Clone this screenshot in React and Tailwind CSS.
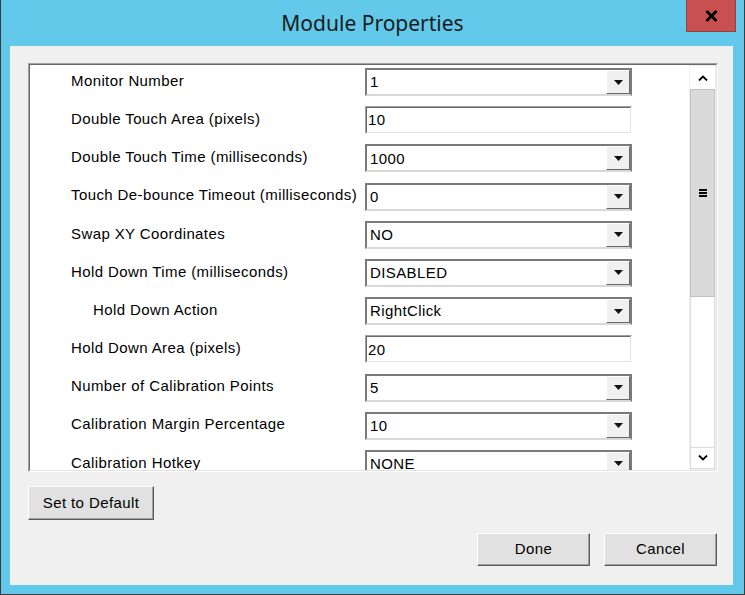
import React from 'react';

const rows = [
  { label: 'Monitor Number', kind: 'select', value: '1' },
  { label: 'Double Touch Area (pixels)', kind: 'input', value: '10' },
  { label: 'Double Touch Time (milliseconds)', kind: 'select', value: '1000' },
  { label: 'Touch De-bounce Timeout (milliseconds)', kind: 'select', value: '0' },
  { label: 'Swap XY Coordinates', kind: 'select', value: 'NO' },
  { label: 'Hold Down Time (milliseconds)', kind: 'select', value: 'DISABLED' },
  { label: 'Hold Down Action', kind: 'select', value: 'RightClick', indent: true },
  { label: 'Hold Down Area (pixels)', kind: 'input', value: '20' },
  { label: 'Number of Calibration Points', kind: 'select', value: '5' },
  { label: 'Calibration Margin Percentage', kind: 'select', value: '10' },
  { label: 'Calibration Hotkey', kind: 'select', value: 'NONE' },
];

const Sunken = ({ children }) => (
  <div className="w-[267px] h-[28px] border border-t-[#a0a0a0] border-l-[#a0a0a0] border-r-[#ffffff] border-b-[#ffffff]">
    <div className="w-full h-full border border-t-[#696969] border-l-[#696969] border-r-[#e3e3e3] border-b-[#e3e3e3] bg-white flex items-center">
      {children}
    </div>
  </div>
);

const DropSelect = ({ value }) => (
  <div className="w-[267px] h-[28px] border-2 border-[#7a7a7a] border-b-[#d8d8d8] bg-white flex items-center">
    <span className="flex-1 pl-[3px] pt-[1px]">{value}</span>
    <div className="w-[24px] h-full bg-[#f0f0f0] border border-t-white border-l-white border-r-[#696969] border-b-[#696969] flex items-center justify-center">
      <svg width="9" height="5" viewBox="0 0 9 5">
        <path d="M0 0 H9 L4.5 5 Z" fill="#111" />
      </svg>
    </div>
  </div>
);

const WinButton = ({ children, className }) => (
  <button
    className={
      'bg-[#e1e1e1] border border-t-[#ffffff] border-l-[#ffffff] border-r-[#5a5a5a] border-b-[#5a5a5a] shadow-[inset_-1px_-1px_0_#a0a0a0] flex items-center justify-center text-[15px] tracking-[0.4px] text-black ' +
      className
    }
  >
    {children}
  </button>
);

export default function App() {
  return (
    <div
      className="w-[745px] h-[595px] bg-[#63c9ea] border-x border-b border-[#3c3c3c] relative overflow-hidden"
      style={{ fontFamily: '"Liberation Sans", Arial, sans-serif' }}
    >
      {/* title bar */}
      <div className="h-[46px] flex items-center justify-center">
        <span
          className="text-[21px] text-[#1b1b1b] pt-[1px]"
          style={{ fontFamily: '"Noto Sans", sans-serif' }}
        >
          Module Properties
        </span>
      </div>
      <div className="absolute top-0 right-[8px] w-[50px] h-[32px] bg-[#c75050] border border-t-0 border-[#9e3b3b] flex items-center justify-center">
        <svg width="13" height="12" viewBox="0 0 13 12">
          <path d="M1.5 1 L11.5 11 M11.5 1 L1.5 11" stroke="#000" strokeWidth="2.8" />
        </svg>
      </div>

      {/* client */}
      <div className="ml-[9px] mr-[11px] h-[539px] bg-[#f0f0f0] flex flex-col">
        <div className="ml-[18px] mt-[17px] w-[690px] h-[409px] border border-t-[#a0a0a0] border-l-[#a0a0a0] border-r-[#ffffff] border-b-[#ffffff]">
          <div className="w-full h-full border border-t-[#696969] border-l-[#696969] border-r-[#e3e3e3] border-b-[#e3e3e3] bg-white flex">
            <div className="flex-1 overflow-hidden flex flex-col gap-[10.2px] pt-[3px] text-[15px] tracking-[0.4px] text-black">
              {rows.map((r) => (
                <div key={r.label} className="flex items-center h-[28px] shrink-0">
                  <div className={r.indent ? 'w-[335px] pl-[63px] pb-[2px]' : 'w-[335px] pl-[41px] pb-[2px]'}>
                    {r.label}
                  </div>
                  {r.kind === 'select' ? (
                    <DropSelect value={r.value} />
                  ) : (
                    <Sunken>
                      <span className="pl-[1px] pt-[1px]">{r.value}</span>
                    </Sunken>
                  )}
                </div>
              ))}
            </div>

            {/* scrollbar */}
            <div className="w-[27px] h-full bg-[#f0f0f0] flex flex-col items-center py-[1px]">
              <div className="w-[25px] h-[23px] bg-white flex items-center justify-center">
                <svg width="10" height="6" viewBox="0 0 10 6">
                  <path d="M1 5.5 L5 1.5 L9 5.5" fill="none" stroke="#000" strokeWidth="1.8" />
                </svg>
              </div>
              <div className="w-[25px] h-[208px] bg-[#dadada] border border-[#c2c2c2] flex items-center justify-center">
                <svg width="8" height="8" viewBox="0 0 8 8">
                  <rect x="0" y="0" width="8" height="2" fill="#000" />
                  <rect x="0" y="3" width="8" height="2" fill="#000" />
                  <rect x="0" y="6" width="8" height="2" fill="#000" />
                </svg>
              </div>
              <div className="w-[25px] flex-1 bg-white border-x border-[#dcdcdc]" />
              <div className="w-[25px] h-[22px] bg-white border border-[#dcdcdc] flex items-center justify-center">
                <svg width="10" height="6" viewBox="0 0 10 6">
                  <path d="M1 0.5 L5 4.5 L9 0.5" fill="none" stroke="#000" strokeWidth="1.8" />
                </svg>
              </div>
            </div>
          </div>
        </div>

        <WinButton className="ml-[18px] mt-[14px] w-[126px] h-[34px]">Set to Default</WinButton>

        <div className="mt-[13px] mr-[16px] flex justify-end gap-[14px]">
          <WinButton className="w-[113px] h-[33px]">Done</WinButton>
          <WinButton className="w-[113px] h-[33px]">Cancel</WinButton>
        </div>
      </div>
    </div>
  );
}
